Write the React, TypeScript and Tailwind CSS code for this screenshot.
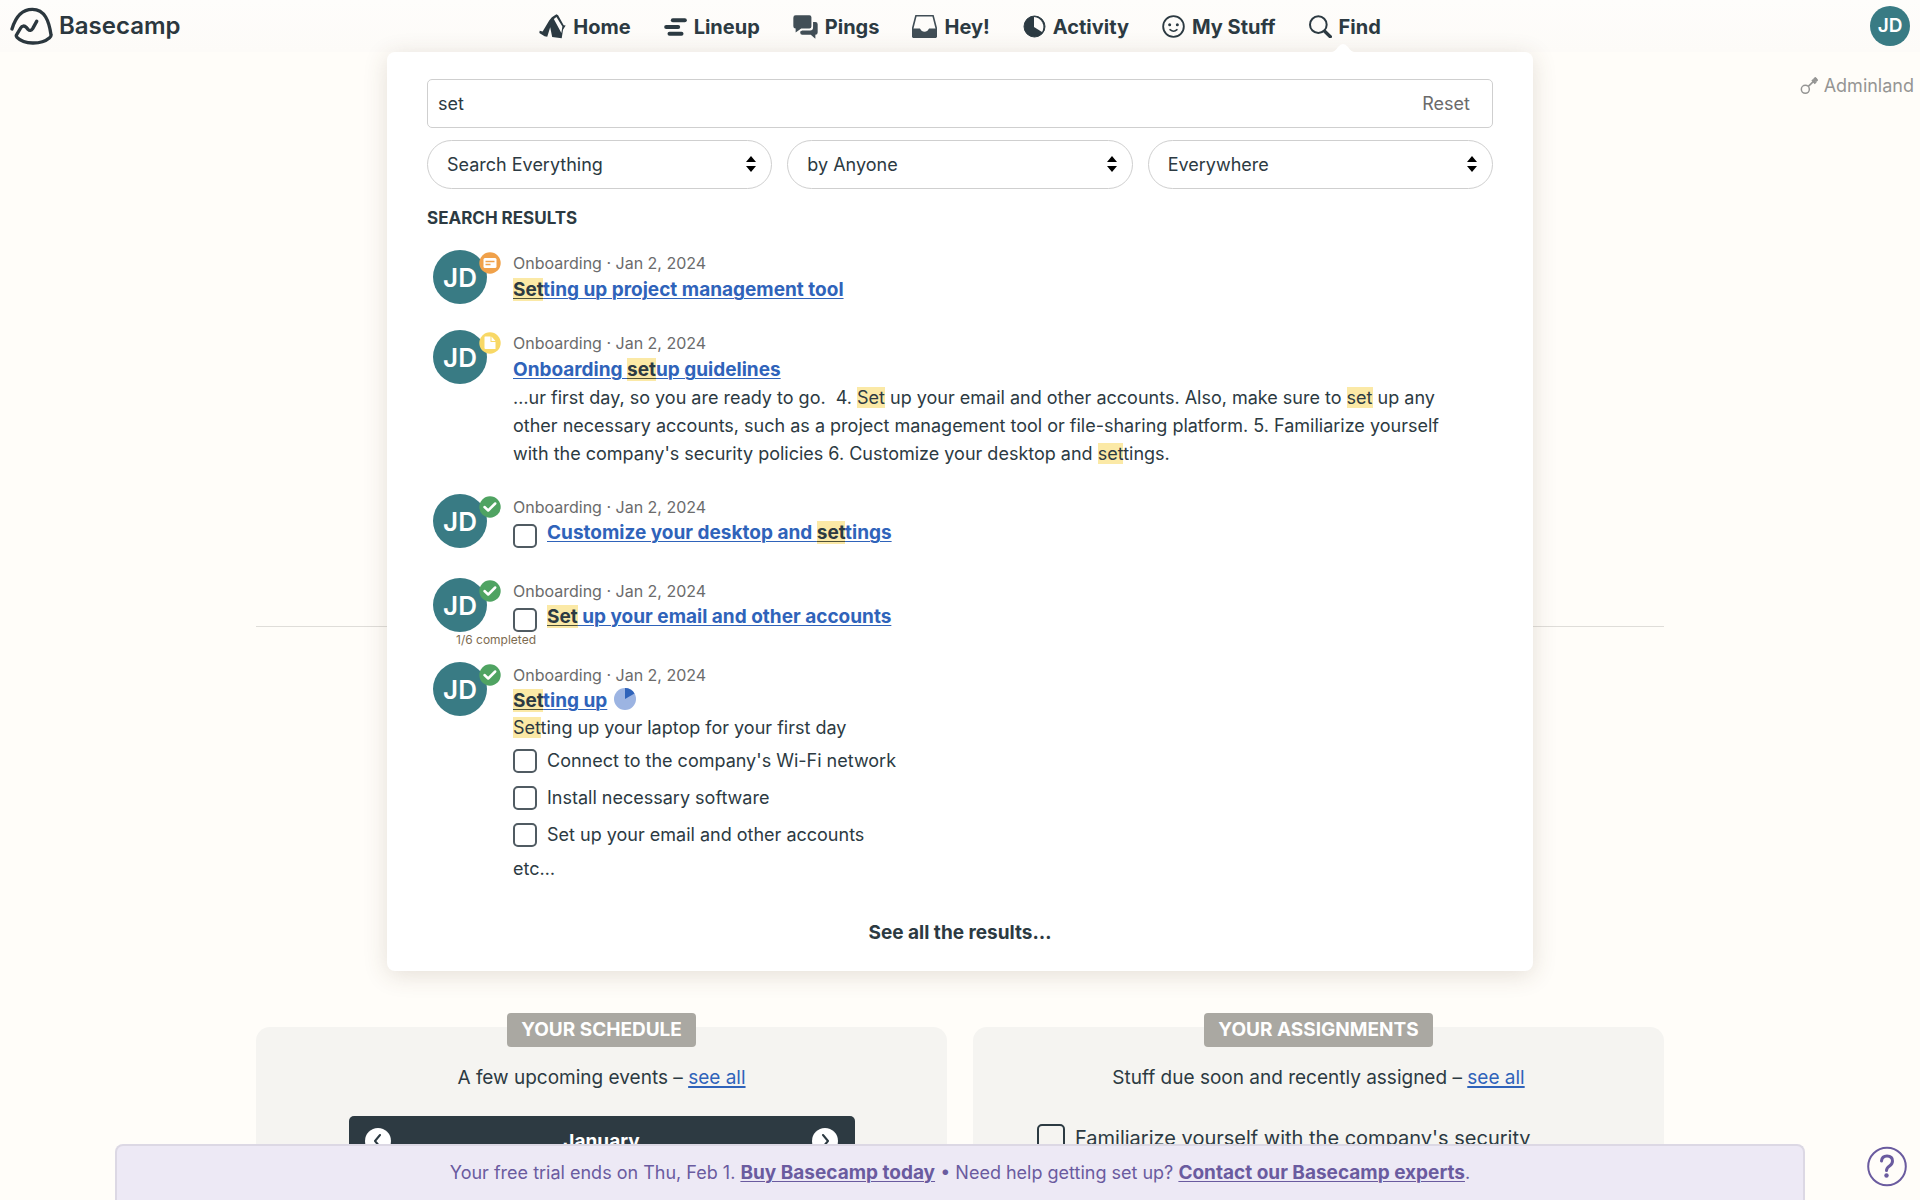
import type { ReactNode } from "react";

const INK = "#2c3a42";

function LogoMark() {
  return (
    <svg width="44" height="38" viewBox="32 22 132 114" fill="none" stroke="#2b373e" strokeWidth="10" strokeLinecap="round" strokeLinejoin="round" aria-hidden="true">
      <path d="M38 88C48 54 66 29 99 29c38 0 50 36 56 76 1 4-1 6-4 9-26 22-77 21-98-1-3-3-3-5-1-8l12-20c4-7 11-8 17-2l5 6c5 5 10 4 14-2l12-22" />
    </svg>
  );
}

function HomeIcon() {
  return (
    <svg width="27" height="25" viewBox="60 42 80 76" fill={INK} aria-hidden="true">
      <path fillRule="evenodd" d="M98 52l14-9 5 3 17 30 6 1-8 13-4 26-29-4-6-30-9 29-8-1-16-10 1-7 9 2 20-33zM104 57l23 43 3-20-18-29z" />
    </svg>
  );
}

function LineupIcon() {
  return (
    <svg width="23" height="18" viewBox="430 53 68 54" fill={INK} aria-hidden="true">
      <rect x="450" y="54" width="48" height="12" rx="6" />
      <rect x="430" y="74" width="48" height="12" rx="6" />
      <rect x="440" y="94" width="48" height="12" rx="6" />
    </svg>
  );
}

function PingsIcon() {
  return (
    <svg width="25" height="24" viewBox="816 45 76 73" fill="#414e56" aria-hidden="true">
      <path d="M824 46h42q6 0 6 6v28q0 6-6 6h-25l-17 12v-12q-7 0-7-7V53q0-7 7-7z" />
      <path d="M877 66h7q7 0 7 7v25q0 7-7 7v12l-14-12h-26q-6 0-6-6v-4l6-3h24q9 0 9-9z" />
    </svg>
  );
}

function HeyIcon() {
  return (
    <svg width="25" height="23" viewBox="1172 45 76 70" aria-hidden="true">
      <path d="M1184 47h52l10 39v22q0 5-5 5h-62q-5 0-5-5V86z" fill="none" stroke="#414e56" strokeWidth="5" strokeLinejoin="round" />
      <path d="M1173 86h23l5 7q9 6 18 0l5-7h23v22q0 6-6 6h-62q-6 0-6-6z" fill="#414e56" />
    </svg>
  );
}

function ActivityIcon() {
  return (
    <svg width="23" height="23" viewBox="0 0 23 23" aria-hidden="true">
      <circle cx="11.500" cy="11.500" r="10.500" fill={INK} stroke={INK} />
      <path d="M11 2a10 10 0 0 1 8 15l-8-5z" fill="#fdfbf9" />
    </svg>
  );
}

function SmileIcon() {
  return (
    <svg width="23" height="23" viewBox="480 45 69 69" fill="none" stroke={INK} strokeWidth="5.500" aria-hidden="true">
      <circle cx="514.500" cy="79.500" r="31" />
      <circle cx="503" cy="74" r="4.500" fill={INK} stroke="none" />
      <circle cx="526" cy="74" r="4.500" fill={INK} stroke="none" />
      <path d="M504 89q11 9 21 0" strokeWidth="4.500" strokeLinecap="round" />
    </svg>
  );
}

function FindIcon() {
  return (
    <svg width="23" height="23" viewBox="923 45 69 69" fill="none" stroke={INK} aria-hidden="true">
      <circle cx="951" cy="74" r="25" strokeWidth="6" />
      <path d="M970 94l17 16" strokeWidth="10" strokeLinecap="round" />
    </svg>
  );
}

function KeyIcon() {
  return (
    <svg width="18" height="18" viewBox="240 233 54 54" fill="none" stroke="#959594" aria-hidden="true">
      <circle cx="256" cy="270" r="12" strokeWidth="4.500" />
      <path d="M265 261l25-24" strokeWidth="5" />
      <path d="M277 241l10 11M283 235l9 10" strokeWidth="8" />
    </svg>
  );
}

function Avatar({ small }: { small?: boolean }) {
  return small ? (
    <span className="flex size-10 items-center justify-center rounded-full bg-[#397b84] text-[19px] font-semibold text-white">JD</span>
  ) : (
    <span className="flex size-[54px] items-center justify-center rounded-full bg-[#397b84] text-[26px] font-semibold text-white">JD</span>
  );
}

type Kind = "message" | "document" | "todo";

function Badge({ kind }: { kind: Kind }) {
  return (
    <svg className="absolute -right-3.5 top-0.5" width="22" height="22" viewBox="0 0 22 22" aria-hidden="true">
      {kind === "message" && (
        <>
          <circle cx="11" cy="11" r="10.700" fill="#f0a14a" />
          <rect x="4.500" y="6" width="13" height="10" rx="1.500" fill="#fff" />
          <path d="M6.500 9.500h9M6.500 12.500h5" stroke="#f0a14a" strokeWidth="1.300" />
        </>
      )}
      {kind === "document" && (
        <>
          <circle cx="11" cy="11" r="10.700" fill="#f8d866" />
          <path d="M6 4.500h5.500v5.500h5v7h-10q-1 0-1-1V5.500q0-1 .5-1zM12.500 4.500l4 4.500h-4z" fill="#fff" />
        </>
      )}
      {kind === "todo" && (
        <>
          <circle cx="11" cy="11" r="10.700" fill="#4fa362" />
          <path d="M5.500 11l3.700 3.500 7-7" fill="none" stroke="#fff" strokeWidth="2.500" strokeLinecap="round" strokeLinejoin="round" />
        </>
      )}
    </svg>
  );
}

function Hit({ children }: { children: ReactNode }) {
  return <mark className="bg-[#fbe9a6] text-[#2c3a42] [a_&]:underline [a_&]:decoration-[#4e5138] [a_&]:decoration-1 [a_&]:underline-offset-2">{children}</mark>;
}

function TitleLink({ children }: { children: ReactNode }) {
  return (
    <a href="#result" className="text-[19px] font-bold text-[#2f63ba] underline decoration-1 underline-offset-2">
      {children}
    </a>
  );
}

const boxClass = "size-6 shrink-0 appearance-none rounded-[5px] border-2 border-[#505b62] bg-white";

function Result({ kind, note, children }: { kind: Kind; note?: string; children: ReactNode }) {
  return (
    <li className="relative flex gap-[26px]">
      {note && <span className="absolute -top-[30px] left-[23px] text-xs leading-4 whitespace-nowrap text-[#7d6b50]">{note}</span>}
      <div className="relative h-[54px] shrink-0">
        <Avatar />
        <Badge kind={kind} />
      </div>
      <div className="min-w-0 flex-1 pr-10 pb-[26px] text-lg leading-7">
        <p className="text-base leading-[26px] text-[#6b6b6b]">Onboarding · Jan 2, 2024</p>
        {children}
      </div>
    </li>
  );
}

function TodoTitle({ label, children }: { label: string; children: ReactNode }) {
  return (
    <div className="flex h-8 items-start gap-2.5 leading-[26px]">
      <input type="checkbox" aria-label={label} className={boxClass + " mt-1"} />
      <TitleLink>{children}</TitleLink>
    </div>
  );
}

function Todo({ label }: { label: string }) {
  return (
    <label className="flex h-[37px] items-center gap-2.5">
      <input type="checkbox" className={boxClass} />
      {label}
    </label>
  );
}

function Filter({ name, value }: { name: string; value: string }) {
  return (
    <div className="relative flex-1">
      <select aria-label={name} className="h-[49px] w-full appearance-none rounded-full border border-[#cfcfcf] bg-white pl-[19px] text-lg">
        <option>{value}</option>
      </select>
      <svg className="pointer-events-none absolute right-4 top-4" width="10" height="16" viewBox="0 0 10 16" fill="#000" aria-hidden="true">
        <path d="M5 0l5 6H0zM5 16l5-6H0z" />
      </svg>
    </div>
  );
}

const nav = [
  { label: "Home", icon: <HomeIcon /> },
  { label: "Lineup", icon: <LineupIcon /> },
  { label: "Pings", icon: <PingsIcon /> },
  { label: "Hey!", icon: <HeyIcon /> },
  { label: "Activity", icon: <ActivityIcon /> },
  { label: "My Stuff", icon: <SmileIcon /> },
  { label: "Find", icon: <FindIcon /> },
];

function SearchPanel() {
  return (
    <section aria-label="Find" className="absolute left-1/2 top-full w-[1146px] max-w-full -translate-x-1/2 rounded-lg bg-white px-10 pb-6 pt-[27px] shadow-[0_4px_24px_rgba(90,60,40,0.16)]">
      <svg className="absolute -top-2 right-[178px]" width="24" height="8" viewBox="0 0 24 8" fill="#fff" aria-hidden="true">
        <path d="M0 8q4 0 7-5 5-6 10 0 3 5 7 5z" />
      </svg>
      <div className="flex h-[49px] items-center rounded-[5px] border border-[#cfcfcf] pl-2.5 pr-[22px] text-lg">
        <input type="text" aria-label="Search" defaultValue="set" className="min-w-0 flex-1 bg-transparent outline-none" />
        <button type="button" className="text-[#6b6b6b]">Reset</button>
      </div>
      <div className="mt-3 flex gap-[15px]">
        <Filter name="Type" value="Search Everything" />
        <Filter name="Person" value="by Anyone" />
        <Filter name="Project" value="Everywhere" />
      </div>
      <h2 className="mt-[17px] text-[17px] leading-6 font-bold">SEARCH RESULTS</h2>
      <ul className="mt-5 px-1.5">
        <Result kind="message">
          <p><TitleLink><Hit>Set</Hit>ting up project management tool</TitleLink></p>
        </Result>
        <Result kind="document">
          <p><TitleLink>Onboarding <Hit>set</Hit>up guidelines</TitleLink></p>
          <p>
            …ur first day, so you are ready to go.&nbsp; 4. <Hit>Set</Hit> up your email and other accounts. Also, make sure to <Hit>set</Hit> up any
            other necessary accounts, such as a project management tool or file-sharing platform. 5. Familiarize yourself
            with the company's security policies 6. Customize your desktop and <Hit>set</Hit>tings.
          </p>
        </Result>
        <Result kind="todo">
          <TodoTitle label="Customize your desktop and settings">Customize your desktop and <Hit>set</Hit>tings</TodoTitle>
        </Result>
        <Result kind="todo">
          <TodoTitle label="Set up your email and other accounts"><Hit>Set</Hit> up your email and other accounts</TodoTitle>
        </Result>
        <Result kind="todo" note="1/6 completed">
          <div className="flex items-center gap-[7px] leading-[26px]">
            <TitleLink><Hit>Set</Hit>ting up</TitleLink>
            <svg className="mb-1" width="22" height="22" viewBox="0 0 22 22" aria-hidden="true">
              <circle cx="11" cy="11" r="11" fill="#9cb4e2" />
              <path d="M11 11V0a11 11 0 0 1 9.500 5.500z" fill="#2f63ba" />
            </svg>
          </div>
          <p><Hit>Set</Hit>ting up your laptop for your first day</p>
          <Todo label="Connect to the company's Wi-Fi network" />
          <Todo label="Install necessary software" />
          <Todo label="Set up your email and other accounts" />
          <p className="pt-0.5">etc…</p>
        </Result>
      </ul>
      <p className="mt-2.5 text-center text-[19px] leading-7 font-bold"><a href="#results">See all the results…</a></p>
    </section>
  );
}

function Card({ title, intro, children }: { title: string; intro: string; children: ReactNode }) {
  return (
    <section className="flex flex-1 flex-col items-center rounded-t-[14px] bg-[#f5f4f1]">
      <h2 className="-mt-3.5 rounded bg-[#aaa8a2] px-3.5 text-[19px] leading-[34px] font-bold text-white">{title}</h2>
      <p className="mt-[15px] text-[19px] leading-8">
        {intro} – <a href="#all" className="text-[#2f63ba] underline decoration-2 underline-offset-2">see all</a>
      </p>
      {children}
    </section>
  );
}

function MonthButton({ label, d }: { label: string; d: string }) {
  return (
    <button type="button" aria-label={label} className="flex size-[26px] items-center justify-center rounded-full bg-white">
      <svg width="14" height="14" viewBox="0 0 14 14" fill="none" stroke={INK} strokeWidth="2" strokeLinecap="round" strokeLinejoin="round" aria-hidden="true">
        <path d={d} />
      </svg>
    </button>
  );
}

export default function App() {
  return (
    <div className="flex h-screen flex-col overflow-hidden bg-[#fffdf9] font-[Inter,sans-serif] text-[#2c3a42]">
      <header className="relative z-10 flex h-[52px] items-center justify-between bg-linear-to-b from-[#fefdfb] to-[#fdfbf8] px-2.5">
        <a href="#home" className="flex flex-1 items-center gap-[5px] text-2xl font-semibold text-[#2b373e]">
          <LogoMark />
          Basecamp
        </a>
        <nav className="flex items-center gap-[33px] pt-px text-xl font-bold">
          {nav.map((item) => (
            <a key={item.label} href={"#" + item.label} className="flex items-center gap-[7px]">
              {item.icon}
              {item.label}
            </a>
          ))}
        </nav>
        <div className="flex flex-1 justify-end"><Avatar small /></div>
        <SearchPanel />
      </header>

      <a href="#adminland" className="mt-5 mr-1.5 flex items-center gap-1.5 self-end text-lg leading-7 text-[#959594]">
        <KeyIcon />
        Adminland
      </a>

      <main className="mx-auto mt-[526px] flex w-full max-w-[1408px] flex-1 flex-col">
        <hr className="border-[#dfddd9]" />
        <div className="mt-[400px] flex flex-1 gap-[26px]">
          <Card title="YOUR SCHEDULE" intro="A few upcoming events">
            <div className="mt-[22px] flex w-[506px] flex-1 items-start justify-between rounded-t-[5px] bg-[#2d3a42] px-4 pt-3 text-white">
              <MonthButton label="Previous month" d="M9 1L4 7l5 6" />
              <h3 className="text-[19px] leading-7 font-bold">January</h3>
              <MonthButton label="Next month" d="M5 1l5 6-5 6" />
            </div>
          </Card>
          <Card title="YOUR ASSIGNMENTS" intro="Stuff due soon and recently assigned">
            <label className="mt-[30px] flex w-full items-start gap-2.5 px-16 text-xl leading-7">
              <input type="checkbox" className="size-7 shrink-0 appearance-none rounded-[5px] border-2 border-[#2c3a42]" />
              Familiarize yourself with the company's security
            </label>
          </Card>
        </div>
      </main>

      <aside className="fixed inset-x-[115px] bottom-0 z-20 h-14 rounded-t-lg border-2 border-b-0 border-[#dcd8e4] bg-[#ede9f5] text-center text-lg leading-[54px] text-[#6a5b9f]">
        Your free trial ends on Thu, Feb 1. <a href="#buy" className="text-[19px] font-bold underline decoration-1 underline-offset-2">Buy Basecamp today</a> • Need help getting set up?{" "}
        <a href="#contact" className="text-[19px] font-bold underline decoration-1 underline-offset-2">Contact our Basecamp experts</a>.
      </aside>

      <button type="button" aria-label="Help" className="fixed bottom-[13px] right-[13px] z-20">
        <svg width="40" height="41" viewBox="0 0 40 41" fill="none" stroke="#6a5b9f" aria-hidden="true">
          <circle cx="20" cy="20.500" r="18.800" strokeWidth="2" />
          <path d="M14.500 15q.5-5 5.500-5 5.500 0 5.500 5 0 3-3 5-3 2-3 4.500" strokeWidth="3" strokeLinecap="round" />
          <circle cx="19.500" cy="29.500" r="2.200" fill="#6a5b9f" stroke="none" />
        </svg>
      </button>
    </div>
  );
}
